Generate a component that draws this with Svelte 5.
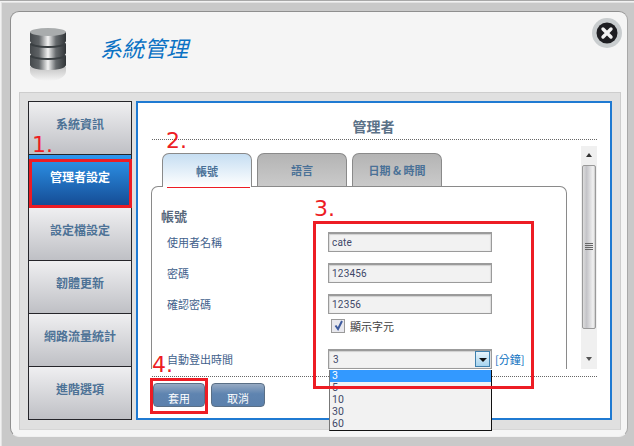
<script>
  const menu = ['系統資訊', '管理者設定', '設定檔設定', '韌體更新', '網路流量統計', '進階選項'];
  const tabs = ['帳號', '語言', '日期 & 時間'];
  const fields = [
    { label: '使用者名稱', value: 'cate' },
    { label: '密碼', value: '123456' },
    { label: '確認密碼', value: '12356' }
  ];
  const options = ['3', '5', '10', '30', '60'];
</script>

<div class="page">
  <div class="window">
    <header class="head">
      <svg class="db" width="40" height="56" viewBox="0 0 40 56" aria-hidden="true">
        <defs>
          <linearGradient id="cyl" x1="0" x2="1" y1="0" y2="0">
            <stop offset="0" stop-color="#45494c" />
            <stop offset=".25" stop-color="#5f6366" />
            <stop offset=".5" stop-color="#f4f4f4" />
            <stop offset=".72" stop-color="#666a6d" />
            <stop offset="1" stop-color="#303437" />
          </linearGradient>
          <linearGradient id="refl" x1="0" x2="0" y1="0" y2="1">
            <stop offset="0" stop-color="#c4c4c4" />
            <stop offset="1" stop-color="#f5f5f5" />
          </linearGradient>
        </defs>
        <path d="M2 40h36v4c0 6-8 10-18 10S2 50 2 44z" fill="url(#refl)" />
        <path d="M2 29h36v9c0 3-8 5-18 5S2 41 2 38z" fill="url(#cyl)" />
        <ellipse cx="20" cy="29" rx="18" ry="4" fill="#3a3f42" />
        <path d="M2 17h36v9c0 3-8 5-18 5S2 29 2 26z" fill="url(#cyl)" />
        <ellipse cx="20" cy="17" rx="18" ry="4" fill="#3a3f42" />
        <path d="M2 5h36v9c0 3-8 5-18 5S2 17 2 14z" fill="url(#cyl)" />
        <ellipse cx="20" cy="5" rx="18" ry="4" fill="#a9acad" />
      </svg>
      <h1>系統管理</h1>
      <button class="close" aria-label="關閉">
        <svg width="30" height="30" viewBox="0 0 30 30" aria-hidden="true">
          <circle cx="15" cy="15" r="15" fill="#c9cdcf" />
          <circle cx="15" cy="15" r="10.5" fill="#1e1e22" />
          <path d="M11 11l8 8M19 11l-8 8" stroke="#f2f2f2" stroke-width="3.4" stroke-linecap="round" />
        </svg>
      </button>
    </header>

    <div class="panel">
      <nav class="menu">
        {#each menu as item, i}
          <div class="item" class:active={i === 1}>{item}</div>
        {/each}
      </nav>

      <main class="main">
        <h2>管理者</h2>
        <div class="body">
          <div class="content">
            <div class="tabs">
              {#each tabs as tab, i}
                <div class="tab" class:current={i === 0}>{tab}</div>
              {/each}
            </div>
            <section class="box">
              <h3>帳號</h3>
              {#each fields as f}
                <div class="row">
                  <span class="label">{f.label}</span>
                  <div class="input">{f.value}</div>
                </div>
              {/each}
              <div class="check">
                <span class="cb">
                  <svg width="13" height="13" viewBox="0 0 13 13" aria-hidden="true">
                    <path d="M3.5 6.5l2.5 3.5 4-8" fill="none" stroke="#3d5a9e" stroke-width="2" />
                  </svg>
                </span>
                <span>顯示字元</span>
              </div>
              <div class="row last">
                <span class="label">自動登出時間</span>
                <div class="input select">
                  <span>3</span>
                  <span class="arrow"></span>
                </div>
                <span class="unit">[分鐘]</span>
              </div>
            </section>
          </div>
          <div class="scroll">
            <span class="up"></span>
            <span class="thumb"><i></i></span>
            <span class="down"></span>
          </div>
        </div>
        <footer class="foot">
          <button class="btn first">套用</button>
          <button class="btn">取消</button>
        </footer>
      </main>
    </div>
  </div>

  <ul class="list">
    {#each options as o, i}
      <li class:sel={i === 0}>{o}</li>
    {/each}
  </ul>

  <span class="mark b1"></span>
  <span class="mark b2"></span>
  <span class="mark b3"></span>
  <span class="mark b4"></span>
  <span class="num n1">1.</span>
  <span class="num n2">2.</span>
  <span class="num n3">3.</span>
  <span class="num n4">4.</span>
</div>

<style>
  :global(body) { margin: 0; }
  .page {
    position: relative;
    width: 634px;
    height: 446px;
    overflow: hidden;
    box-sizing: border-box;
    padding: 11px 6px 9px 10px;
    background: #c9c9c9;
    border-top: 1px solid #a8a8a8;
    box-shadow: inset 1px 1px 0 #f2f2f2, inset 2px 2px 0 #e2e2e2;
    font-family: "Noto Sans CJK TC", "Liberation Sans", sans-serif;
    color: #3f5f8c;
  }
  .window {
    box-sizing: border-box;
    height: 426px;
    margin-top: -1px;
    background: #f5f5f5;
    border: 1px solid #8f8f8f;
    border-right-color: #a8a8a8;
    border-bottom-color: #f0f0f0;
    border-radius: 9px;
    display: flex;
    flex-direction: column;
  }
  .head {
    height: 80px;
    flex: none;
    display: flex;
    align-items: flex-start;
    box-sizing: border-box;
  }
  .db { margin: 15px 0 0 17px; flex: none; }
  h1 {
    margin: 20px 0 0 32px;
    font-size: 22px;
    line-height: 30px;
    font-weight: 400;
    font-style: italic;
    color: #0b72c4;
  }
  .close {
    margin: 6px 5px 0 auto;
    padding: 0;
    border: 0;
    background: none;
    width: 30px;
    height: 30px;
  }
  .close svg { display: block; }
  .panel {
    margin: 0 6px 0 8px;
    height: 338px;
    box-sizing: border-box;
    padding: 8px 8px 9px 8px;
    display: flex;
    gap: 4px;
    background: #e0e0e0;
    border: 1px solid #cdcdcd;
    border-bottom: 1px solid #d6d6d6;
  }
  .menu {
    width: 104px;
    display: flex;
    flex-direction: column;
    flex: none;
  }
  .item {
    flex: 1;
    box-sizing: border-box;
    display: flex;
    align-items: center;
    justify-content: center;
    padding-bottom: 10px;
    border: 1px solid #25252a;
    margin-top: -1px;
    background: linear-gradient(#efeff1, #bfc0c5);
    color: #4d7296;
    font-size: 12px;
    font-weight: 700;
  }
  .item:first-child { margin-top: 0; }
  .item.active {
    background: linear-gradient(#2e97ee, #144a92);
    color: #fff;
  }
  .main {
    flex: 1;
    box-sizing: border-box;
    background: #fff;
    border: 2px solid #1f7ad2;
    display: flex;
    flex-direction: column;
  }
  h2 {
    margin: 0 13px 0 14px;
    height: 37px;
    box-sizing: border-box;
    padding: 13px 2px 0 0;
    border-bottom: 1px dotted #666;
    text-align: center;
    font-size: 14px;
    line-height: 20px;
    font-weight: 700;
    color: #5b7187;
  }
  .body { display: flex; height: 229px; flex: none; margin-left: 13px; }
  .content { width: 416px; flex: none; padding-top: 13px; box-sizing: border-box; display: flex; flex-direction: column; }
  .tabs { display: flex; gap: 5px; padding-left: 11px; height: 33px; flex: none; }
  .tab {
    width: 90px;
    box-sizing: border-box;
    display: flex;
    align-items: center;
    justify-content: center;
    border: 1px solid #8a8a8a;
    border-bottom: 0;
    border-radius: 7px 7px 0 0;
    background: linear-gradient(#b4b4b4, #cacaca);
    color: #4a7197;
    font-size: 11px;
    font-weight: 700;
  }
  .tab.current {
    background: linear-gradient(#c6def2, #fff);
    position: relative;
    z-index: 1;
    height: 34px;
  }
  .box {
    flex: 1;
    box-sizing: border-box;
    border: 1px solid #8a8a8a;
    border-bottom: 0;
    border-radius: 7px 7px 0 0;
    padding: 19px 0 0 15px;
  }
  h3 {
    margin: 0 0 6px -6px;
    height: 20px;
    font-size: 13px;
    line-height: 20px;
    font-weight: 700;
    color: #56677b;
  }
  .row { display: flex; align-items: center; height: 20px; margin-bottom: 11px; font-size: 11px; }
  .label { width: 161px; flex: none; }
  .input {
    box-sizing: border-box;
    width: 164px;
    height: 20px;
    line-height: 18px;
    padding-left: 3px;
    background: #f2f2f2;
    border: 1px solid #9b9b9b;
    border-top-width: 2px;
    box-shadow: inset 0 1px 1px #d0d0d0, inset -1px 0 1px #dcdcdc, inset 1px 0 1px #dcdcdc;
    font-family: Roboto, sans-serif;
    font-size: 10px;
    letter-spacing: .2px;
    color: #3f4868;
  }
  .check {
    display: flex;
    align-items: center;
    gap: 5px;
    height: 16px;
    margin: -7px 0 15px 164px;
    font-size: 11px;
    color: #404040;
  }
  .cb {
    width: 12px;
    height: 12px;
    background: #e8e8ee;
    border: 1px solid #9a9a9a;
    display: block;
  }
  .cb svg { display: block; margin: -1px 0 0 0; }
  .row.last { margin: 0; height: 19px; }
  .select {
    height: 20px;
    display: flex;
    justify-content: space-between;
    padding: 0 0 0 4px;
    border-color: #9b9b9b;
  }
  .arrow {
    width: 15px;
    height: 16px;
    margin-right: 1px;
    box-sizing: border-box;
    border: 1px solid #3f80ad;
    background: linear-gradient(#e8f4fb, #a6d4ef);
    position: relative;
  }
  .arrow::after {
    content: "";
    position: absolute;
    left: 3px;
    top: 6px;
    border: 4px solid transparent;
    border-top: 4px solid #111;
    border-bottom: 0;
  }
  .unit { margin-left: 3px; color: #0b6fc0; font-size: 11px; }
  .scroll {
    margin: 6px 0 0 14px;
    width: 16px;
    height: 223px;
    box-sizing: border-box;
    background: #f0f0f0;
    display: flex;
    flex-direction: column;
    align-items: center;
  }
  .up, .down { height: 18px; flex: none; width: 100%; position: relative; }
  .up::after, .down::after {
    content: "";
    position: absolute;
    left: 5px;
    border: 3px solid transparent;
  }
  .up::after { top: 7px; border-bottom: 4px solid #333; border-top: 0; }
  .down { margin-top: auto; }
  .down::after { top: 6px; border-top: 4px solid #555; border-bottom: 0; }
  .thumb {
    height: 164px;
    width: 14px;
    margin-top: 1px;
    box-sizing: border-box;
    border: 1px solid #9a9a9a;
    border-radius: 2px;
    background: linear-gradient(90deg, #dcdcdc, #c4c4c8 30%, #f2f2f2 85%, #c8c8c8);
    display: flex;
    align-items: center;
    justify-content: center;
  }
  .thumb i {
    display: block;
    width: 8px;
    height: 8px;
    background: repeating-linear-gradient(#666 0 1px, transparent 1px 2px);
  }
  .foot {
    margin: 7px 13px 0 14px;
    padding: 6px 0 0 1px;
    border-top: 1px dotted #666;
    display: flex;
    gap: 6px;
  }
  .btn {
    width: 54px;
    height: 24px;
    padding: 5px 0 0;
    border: 1px solid #5a6f86;
    border-radius: 4px;
    background: linear-gradient(#96aac3, #5f84b0 45%, #5b80ac);
    color: #fff;
    font-family: inherit;
    font-size: 11px;
    line-height: 18px;
  }
  .btn.first { width: 52px; }
  .list {
    position: absolute;
    left: 329px;
    top: 369px;
    width: 163px;
    height: 61px;
    box-sizing: border-box;
    margin: 0;
    padding: 0;
    list-style: none;
    background: #f2f2f2;
    border: 1px solid #111;
    border-top: 0;
    border-left-color: #777;
    font-family: Roboto, sans-serif;
    font-size: 10.5px;
    letter-spacing: .2px;
    color: #3f4868;
  }
  .list li { height: 12px; line-height: 12px; padding-left: 2px; }
  .list li.sel { background: #3399ff; color: #fff; }
  .mark { position: absolute; box-sizing: border-box; border: 3px solid #ed1c24; }
  .b1 { left: 29px; top: 158px; width: 103px; height: 49px; }
  .b2 { left: 167px; top: 155px; width: 83px; height: 32px; }
  .b3 { left: 313px; top: 220px; width: 221px; height: 168px; }
  .b4 { left: 150px; top: 377px; width: 58px; height: 36px; }
  .num {
    position: absolute;
    font-family: "DejaVu Sans", sans-serif;
    font-size: 22px;
    line-height: 24px;
    color: #ed1c24;
  }
  .n1 { left: 32px; top: 132px; }
  .n2 { left: 166px; top: 128px; }
  .n3 { left: 314px; top: 196px; }
  .n4 { left: 152px; top: 352px; }
</style>
